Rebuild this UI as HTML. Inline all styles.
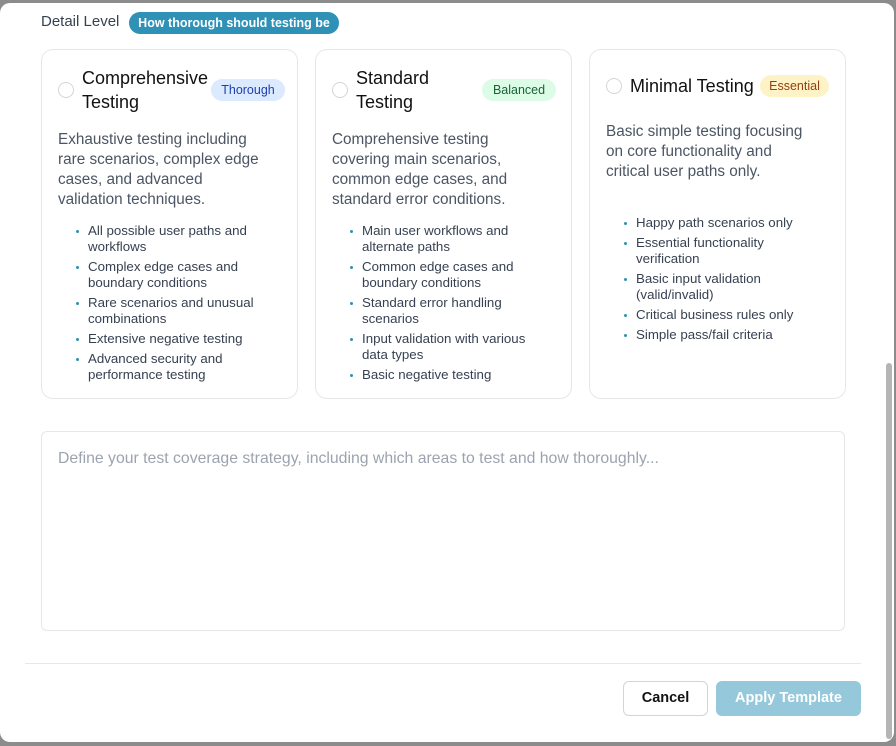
<!DOCTYPE html>
<html><head><style>
*{box-sizing:border-box;margin:0;padding:0}
body{width:896px;height:746px;background:#8c8c8c;font-family:"Liberation Sans",sans-serif;position:relative;overflow:hidden}
.modal{position:absolute;left:0;top:3px;width:894px;height:739px;background:#fff;border-radius:10px}
.abs{position:absolute;white-space:nowrap}
.card{position:absolute;top:49px;width:257px;height:350px;border:1px solid #e5e7eb;border-radius:12px}
.radio{position:absolute;left:16px;width:16px;height:16px;border:1px solid #d1d5db;border-radius:50%}
.title{position:absolute;left:40px;font-size:18px;color:#111;line-height:24px}
.badge{position:absolute;height:22px;border-radius:11px;font-size:12.5px;line-height:22px;text-align:center}
.desc{position:absolute;left:16px;font-size:15.3px;color:#4b5563;line-height:20px}
ul{position:absolute;left:34px;list-style:none;font-size:13.3px;color:#374151;line-height:16px}
li{position:relative;padding-left:12px;margin-bottom:4px}
li:before{content:"";position:absolute;left:0;top:7px;width:3px;height:3px;border-radius:50%;background:#2e91b5}
</style></head><body>
<div class="modal"></div>
<div class="abs" style="left:41px;top:13px;font-size:15px;color:#374151">Detail Level</div>
<div class="abs" style="left:129px;top:12px;width:210px;height:22px;background:#2e91b5;border-radius:11px;color:#fff;font-size:12.5px;font-weight:bold;line-height:22px;text-align:center">How thorough should testing be</div>

<div class="card" style="left:41px">
 <div class="radio" style="top:32px"></div>
 <div class="title" style="top:16px">Comprehensive<br>Testing</div>
 <div class="badge" style="left:169px;top:29px;width:74px;background:#dbeafe;color:#1e40af">Thorough</div>
 <div class="desc" style="top:80px">Exhaustive testing including<br>rare scenarios, complex edge<br>cases, and advanced<br>validation techniques.</div>
 <ul style="top:173px"><li>All possible user paths and<br>workflows</li><li>Complex edge cases and<br>boundary conditions</li><li>Rare scenarios and unusual<br>combinations</li><li>Extensive negative testing</li><li>Advanced security and<br>performance testing</li></ul>
</div>
<div class="card" style="left:315px">
 <div class="radio" style="top:32px"></div>
 <div class="title" style="top:16px">Standard<br>Testing</div>
 <div class="badge" style="left:166px;top:29px;width:74px;background:#dcfce7;color:#166534">Balanced</div>
 <div class="desc" style="top:80px">Comprehensive testing<br>covering main scenarios,<br>common edge cases, and<br>standard error conditions.</div>
 <ul style="top:173px"><li>Main user workflows and<br>alternate paths</li><li>Common edge cases and<br>boundary conditions</li><li>Standard error handling<br>scenarios</li><li>Input validation with various<br>data types</li><li>Basic negative testing</li></ul>
</div>
<div class="card" style="left:589px">
 <div class="radio" style="top:28px"></div>
 <div class="title" style="top:24px">Minimal Testing</div>
 <div class="badge" style="left:170px;top:25px;width:69px;background:#fef3c7;color:#92400e">Essential</div>
 <div class="desc" style="top:72px">Basic simple testing focusing<br>on core functionality and<br>critical user paths only.</div>
 <ul style="top:165px"><li>Happy path scenarios only</li><li>Essential functionality<br>verification</li><li>Basic input validation<br>(valid/invalid)</li><li>Critical business rules only</li><li>Simple pass/fail criteria</li></ul>
</div>

<div class="abs" style="left:41px;top:431px;width:804px;height:200px;border:1px solid #e5e7eb;border-radius:6px"></div>
<div class="abs" style="left:58px;top:450px;font-size:15.8px;color:#9ca3af">Define your test coverage strategy, including which areas to test and how thoroughly...</div>

<div class="abs" style="left:25px;top:663px;width:836px;height:1px;background:#e5e7eb"></div>
<div class="abs" style="left:623px;top:681px;width:85px;height:35px;border:1px solid #d1d5db;border-radius:6px;font-size:14.5px;font-weight:bold;color:#111;text-align:center;line-height:33px">Cancel</div>
<div class="abs" style="left:716px;top:681px;width:145px;height:35px;background:#96c8dc;border-radius:6px;font-size:14.5px;font-weight:bold;color:#fff;text-align:center;line-height:35px">Apply Template</div>

<div class="abs" style="left:886px;top:363px;width:6px;height:376px;background:#b5b5b5;border-radius:3px"></div>
</body></html>
